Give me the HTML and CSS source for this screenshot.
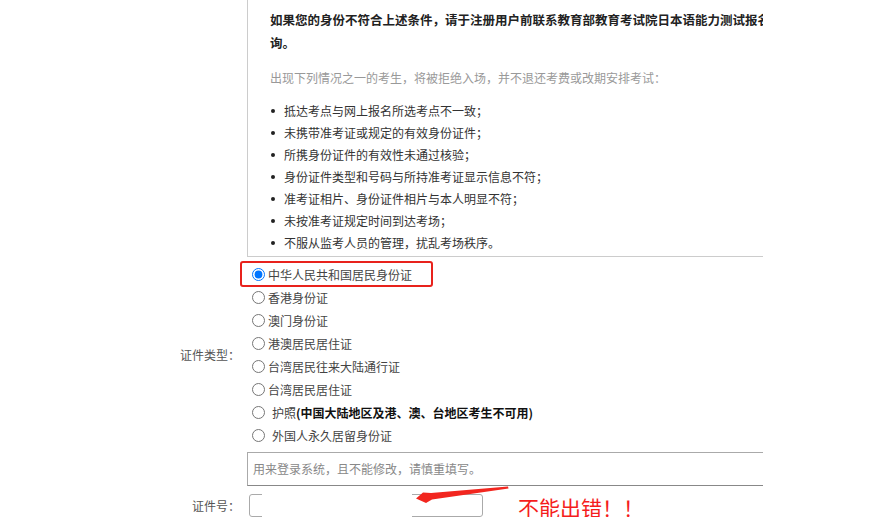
FILE: index.html
```html
<!DOCTYPE html>
<html lang="zh-CN">
<head>
  <meta charset="UTF-8">
  <title>报名信息</title>
  <link rel="stylesheet" href="styles.css">
</head>
<body>
  <div class="form">
    <div class="row">
      <div class="row-label"></div>
      <div class="field field-clip">
        <div class="notice">
          <p class="notice-strong">如果您的身份不符合上述条件，请于注册用户前联系教育部教育考试院日本语能力测试报名咨<br>询。</p>
          <p class="notice-muted">出现下列情况之一的考生，将被拒绝入场，并不退还考费或改期安排考试：</p>
          <ul class="notice-list">
            <li>抵达考点与网上报名所选考点不一致；</li>
            <li>未携带准考证或规定的有效身份证件；</li>
            <li>所携身份证件的有效性未通过核验；</li>
            <li>身份证件类型和号码与所持准考证显示信息不符；</li>
            <li>准考证相片、身份证件相片与本人明显不符；</li>
            <li>未按准考证规定时间到达考场；</li>
            <li>不服从监考人员的管理，扰乱考场秩序。</li>
          </ul>
        </div>
      </div>
    </div>

    <div class="row row-center">
      <div class="row-label">证件类型：</div>
      <div class="field">
        <div class="radios">
          <label class="option option-marked"><input type="radio" name="idtype" checked>中华人民共和国居民身份证</label>
          <label class="option"><input type="radio" name="idtype">香港身份证</label>
          <label class="option"><input type="radio" name="idtype">澳门身份证</label>
          <label class="option"><input type="radio" name="idtype">港澳居民居住证</label>
          <label class="option"><input type="radio" name="idtype">台湾居民往来大陆通行证</label>
          <label class="option"><input type="radio" name="idtype">台湾居民居住证</label>
          <label class="option option-wide"><input type="radio" name="idtype"><span>护照<b>(中国大陆地区及港、澳、台地区考生不可用)</b></span></label>
          <label class="option option-wide"><input type="radio" name="idtype"><span>外国人永久居留身份证</span></label>
        </div>
      </div>
    </div>

    <div class="row">
      <div class="row-label"></div>
      <div class="field field-clip">
        <div class="hint">用来登录系统，且不能修改，请慎重填写。</div>
      </div>
    </div>

    <div class="row row-center row-input">
      <div class="row-label">证件号：</div>
      <div class="field field-input">
        <input type="text" class="text-input">
        <span class="warn">不能出错！！</span>
      </div>
    </div>
  </div>

  <!-- 截图上的标注：箭头 -->
  <svg class="mark" width="870" height="531" viewBox="0 0 870 531">
    <rect x="262" y="491" width="150" height="29" fill="#fff"/>
    <polygon points="416,498.5 423,492.5 431,493 508,486.5 508.5,488.5 432,499.5 426,503" fill="#f2261f"/>
  </svg>
</body>
</html>
```

FILE: styles.css
```css
body {
  margin: 0;
  font-family: "Noto Sans CJK SC", "Noto Sans", sans-serif;
  font-size: 12px;
  color: #444;
  background: #fff;
}
.form {
  width: 763px;
}
.row {
  display: flex;
}
.row-center {
  align-items: center;
}
.row-label {
  width: 247px;
  flex-shrink: 0;
  box-sizing: border-box;
  padding-right: 7px;
  text-align: right;
  color: #555;
}
.field {
  width: 516px;
}
.field-clip {
  overflow: hidden;
}

/* ---- 注意事项 ---- */
.notice {
  width: 620px;
  border: 1px solid #ccc;
  border-top: none;
  padding: 8px 0 2px 22px;
}
.notice p {
  margin: 0;
}
.notice-strong {
  font-size: 12.5px;
  font-weight: bold;
  line-height: 23px;
  color: #222;
  white-space: nowrap;
}
.notice-muted {
  margin-top: 12px !important;
  line-height: 23px;
  color: #999;
}
.notice-list {
  list-style: none;
  margin: 11px 0 0;
  padding: 0;
  color: #333;
}
.notice-list li {
  position: relative;
  padding-left: 14px;
  line-height: 22px;
}
.notice-list li::before {
  content: "";
  position: absolute;
  left: 1px;
  top: 9px;
  width: 4px;
  height: 4px;
  border-radius: 50%;
  background: #222;
}

/* ---- 证件类型 ---- */
.radios {
  padding: 6px 0 5px;
}
.option {
  display: flex;
  align-items: center;
  height: 23px;
  color: #444;
  white-space: nowrap;
}
.option input {
  margin: 0 3px 0 5px;
  width: 13px;
  height: 13px;
}
.option-wide span {
  margin-left: 4px;
}
.option b {
  color: #111;
}
.option-marked {
  position: relative;
}
.option-marked::after {
  content: "";
  position: absolute;
  left: -7px;
  top: -2px;
  width: 189px;
  height: 22px;
  border: 2px solid #e8221c;
  border-radius: 3px;
}

/* ---- 提示 ---- */
.hint {
  width: 620px;
  height: 32px;
  line-height: 32px;
  border: 1px solid #aaa;
  border-bottom-color: #888;
  padding-left: 5px;
  color: #888;
}

/* ---- 证件号 ---- */
.row-input {
  margin-top: 8px;
}
.field-input {
  display: flex;
  align-items: flex-start;
  height: 23px;
}
.text-input {
  box-sizing: border-box;
  width: 234px;
  height: 23px;
  margin: 0 0 0 2px;
  border: 1px solid #aaa;
  border-radius: 3px;
}
.warn {
  margin-left: 35px;
  margin-top: 2px;
  font-size: 21px;
  line-height: 23px;
  color: #f51d1d;
}
.mark {
  position: absolute;
  left: 0;
  top: 0;
  pointer-events: none;
}
```
